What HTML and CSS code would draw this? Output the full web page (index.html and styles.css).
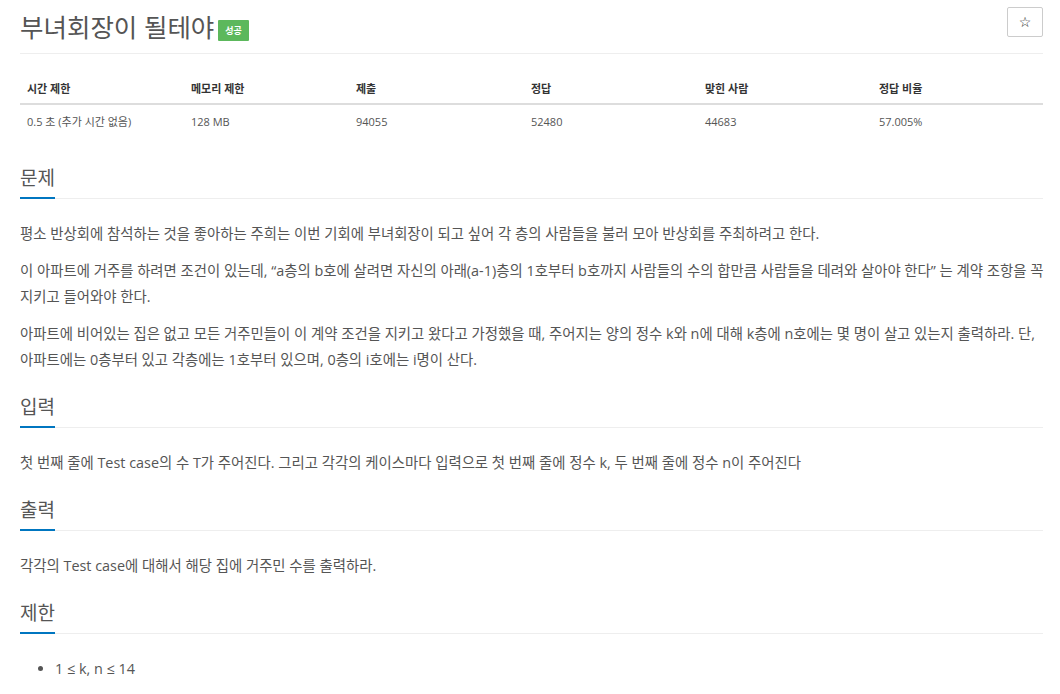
FILE: index.html
```html
<!DOCTYPE html>
<html lang="ko">
<head>
<meta charset="utf-8">
<link rel="stylesheet" href="styles.css">
</head>
<body>
<div class="page">
  <div class="page-header">
    <h1 class="title">부녀회장이 될테야 <span class="badge">성공</span></h1>
    <button class="star" type="button">☆</button>
  </div>
  <table class="info">
    <thead>
      <tr><th class="c1">시간 제한</th><th class="c2">메모리 제한</th><th class="c3">제출</th><th class="c4">정답</th><th class="c5">맞힌 사람</th><th>정답 비율</th></tr>
    </thead>
    <tbody>
      <tr><td>0.5 초 (추가 시간 없음)</td><td>128 MB</td><td>94055</td><td>52480</td><td>44683</td><td>57.005%</td></tr>
    </tbody>
  </table>

  <section class="sec sec-first">
    <div class="headline"><h2>문제</h2></div>
    <div class="text">
      <p>평소 반상회에 참석하는 것을 좋아하는 주희는 이번 기회에 부녀회장이 되고 싶어 각 층의 사람들을 불러 모아 반상회를 주최하려고 한다.</p>
      <p>이 아파트에 거주를 하려면 조건이 있는데, “a층의 b호에 살려면 자신의 아래(a-1)층의 1호부터 b호까지 사람들의 수의 합만큼 사람들을 데려와 살아야 한다” 는 계약 조항을 꼭 지키고 들어와야 한다.</p>
      <p>아파트에 비어있는 집은 없고 모든 거주민들이 이 계약 조건을 지키고 왔다고 가정했을 때, 주어지는 양의 정수 k와 n에 대해 k층에 n호에는 몇 명이 살고 있는지 출력하라. 단, 아파트에는 0층부터 있고 각층에는 1호부터 있으며, 0층의 i호에는 i명이 산다.</p>
    </div>
  </section>

  <section class="sec">
    <div class="headline"><h2>입력</h2></div>
    <div class="text">
      <p>첫 번째 줄에 Test case의 수 T가 주어진다. 그리고 각각의 케이스마다 입력으로 첫 번째 줄에 정수 k, 두 번째 줄에 정수 n이 주어진다</p>
    </div>
  </section>

  <section class="sec">
    <div class="headline"><h2>출력</h2></div>
    <div class="text">
      <p>각각의 Test case에 대해서 해당 집에 거주민 수를 출력하라.</p>
    </div>
  </section>

  <section class="sec">
    <div class="headline"><h2>제한</h2></div>
    <div class="text">
      <ul><li>1 ≤ k, n ≤ 14</li></ul>
    </div>
  </section>
</div>
</body>
</html>
```

FILE: styles.css
```css
html, body {
  margin: 0;
  padding: 0;
  background: #fff;
}
body {
  font-family: "Open Sans", "Noto Sans CJK KR", sans-serif;
  color: #555;
  font-size: 14.4px;
}
.page {
  padding: 0 17px 0 20px;
}
.page-header {
  display: flex;
  justify-content: space-between;
  align-items: flex-start;
  border-bottom: 1px solid #eee;
  height: 53px;
}
.title {
  margin: 8px 0 0 0;
  font-size: 25.5px;
  font-weight: 400;
  line-height: 38px;
  color: #555;
  display: flex;
  align-items: center;
}
.badge {
  display: inline-block;
  margin-left: 4px;
  margin-top: 6px;
  background: #5cb85c;
  color: #fff;
  font-size: 9px;
  font-weight: 600;
  line-height: 21px;
  padding: 0 7px;
  border-radius: 1px;
}
.star {
  margin-top: 7px;
  width: 36px;
  height: 30px;
  border: 1px solid #ccc;
  border-radius: 2px;
  background: #fff;
  color: #222;
  font-size: 14px;
  padding: 0;
  font-family: "DejaVu Sans", sans-serif;
}
.info {
  width: 100%;
  border-collapse: collapse;
  margin-top: 19px;
  font-size: 11px;
}
.info th {
  text-align: left;
  font-weight: 700;
  color: #333;
  padding: 0 7px;
  height: 30px;
  border-bottom: 2px solid #ddd;
  vertical-align: middle;
}
.info td {
  padding: 0 7px;
  height: 32px;
  vertical-align: middle;
  color: #555;
}
.info .c1 { width: 150px; }
.info .c2 { width: 151px; }
.info .c3 { width: 161px; }
.info .c4 { width: 160px; }
.info .c5 { width: 160px; }
.sec {
  margin-top: 19px;
}
.sec-first {
  margin-top: 26px;
}
.headline {
  border-bottom: 1px solid #eee;
}
.headline h2 {
  display: inline-block;
  margin: 0 0 -1px 0;
  font-size: 19px;
  font-weight: 400;
  color: #555;
  line-height: 30px;
  padding-bottom: 4px;
  border-bottom: 2px solid #0076c0;
  min-width: 35px;
}
.text {
  padding-top: 22px;
  margin-right: -5px;
  word-break: keep-all;
}
.text p {
  margin: 0 0 11px 0;
  line-height: 26px;
}
.text ul {
  margin: 0;
  padding-left: 35px;
  line-height: 26px;
}
```
